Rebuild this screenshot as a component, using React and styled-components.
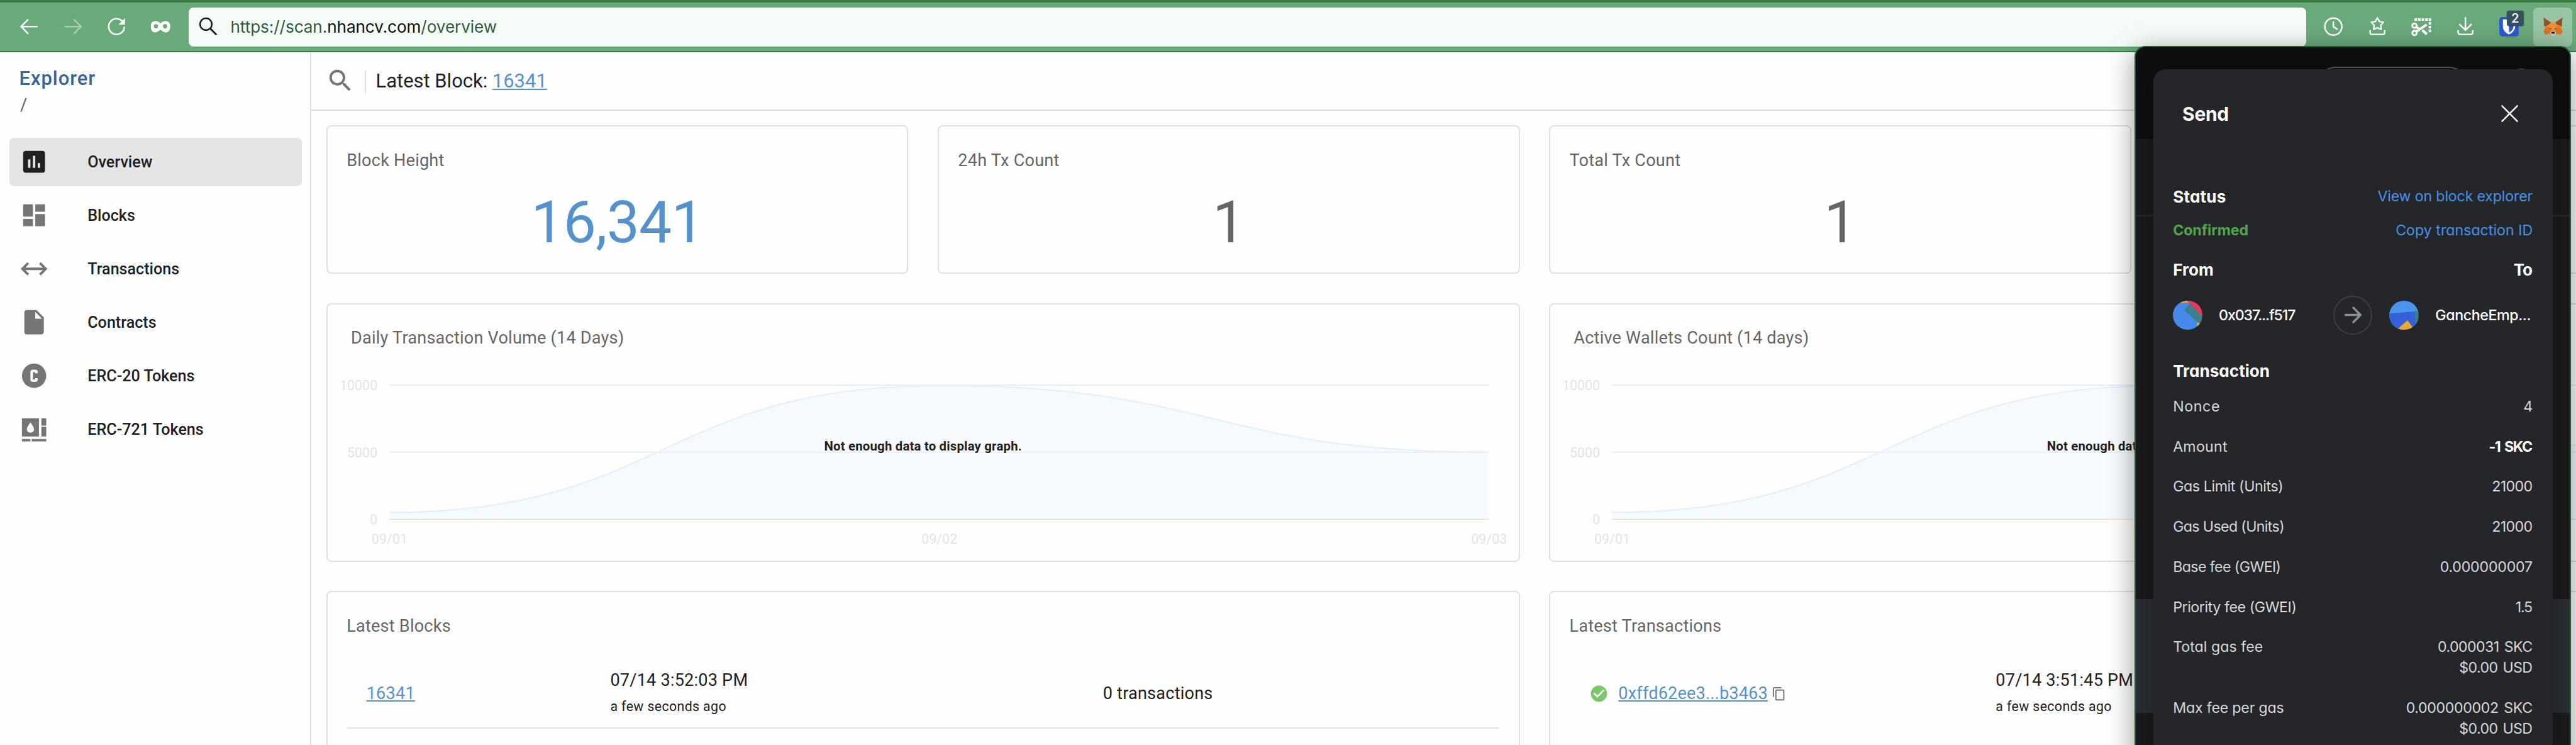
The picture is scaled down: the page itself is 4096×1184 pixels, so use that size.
import React from 'react';
import styled, { createGlobalStyle } from 'styled-components';

const GlobalStyle = createGlobalStyle`
  html, body { margin: 0; padding: 0; background: #fff; overflow: hidden; }
  *, *::before, *::after { box-sizing: border-box; }
`;

const Window = styled.div`
  zoom: 0.967;
  position: relative;
  display: flex;
  flex-direction: column;
  width: 4236px;
  height: 1224.5px;
  overflow: hidden;
  background: #fefefe;
  color: #212121;
  font-family: Roboto, "Liberation Sans", sans-serif;
`;

/* ---------- Browser toolbar ---------- */

const Toolbar = styled.header`
  display: flex;
  align-items: center;
  flex: none;
  height: 86px;
  padding: 0 6px 0 24px;
  background: #69aa7b;
  border-top: 4.2px solid #397d43;
  border-bottom: 2.1px solid #3a7d44;
`;

const NavButtons = styled.div`
  display: flex;
  gap: 24px;
  width: 286px;
  flex: none;
`;

const ToolIcon = styled.svg`
  display: block;
  flex: none;
  width: ${(p) => p.$size || 48}px;
  height: ${(p) => p.$size || 48}px;
  opacity: ${(p) => (p.$dim ? 0.42 : 1)};
  overflow: visible;
  fill: none;
  stroke: ${(p) => p.$stroke || '#fff'};
  stroke-width: ${(p) => p.$weight || 2.6};
  stroke-linecap: round;
  stroke-linejoin: round;
`;

const AddressBar = styled.div`
  display: flex;
  align-items: center;
  flex: none;
  width: 3482px;
  height: 64px;
  border-radius: 8px;
  background: #f5fbf7;
  padding-left: 14px;
`;

const Url = styled.span`
  margin-left: 15px;
  padding-top: 1.5px;
  line-height: 40px;
  font-family: Inter, sans-serif;
  font-size: 27px;
  letter-spacing: -0.06px;
  color: #315a3a;
  b { font-weight: 400; color: #0b0f0c; }
`;

const Extensions = styled.div`
  display: flex;
  align-items: center;
  justify-content: space-between;
  flex: 1;
  padding-left: 13px;
`;

const ExtensionSlot = styled.div`
  position: relative;
  display: flex;
  align-items: center;
  justify-content: center;
  width: 64px;
  height: 64px;
  border-radius: 8px;
  background: ${(p) => (p.$active ? '#97c4a3' : 'transparent')};
`;

const CountBadge = styled.span`
  position: absolute;
  top: 6px;
  right: 8px;
  width: 28px;
  height: 24px;
  border-radius: 4px;
  background: #35505f;
  color: #fff;
  font: 500 21px/24px Inter, sans-serif;
  text-align: center;
  box-shadow: 0 1px 2px rgba(0, 0, 0, 0.35);
`;

/* ---------- Page ---------- */

const Page = styled.div`
  display: flex;
  flex: 1;
  min-height: 0;
`;

const Sidebar = styled.aside`
  flex: none;
  width: 512px;
  padding-top: 23.8px;
  border-right: 2.1px solid #e0e0e0;
`;

const Brand = styled.div`
  padding-left: 31.5px;
  font-size: 32px;
  font-weight: 500;
  line-height: 40px;
  letter-spacing: 1px;
  color: #366596;
`;

const Crumb = styled.div`
  padding: 2.9px 0 0 33px;
  font-size: 28px;
  line-height: 40px;
  color: #5f5f5f;
`;

const Menu = styled.nav`
  display: flex;
  flex-direction: column;
  gap: 8px;
  padding: 33.3px 14px 0 16px;
`;

const MenuItem = styled.a`
  display: flex;
  align-items: center;
  gap: 64px;
  height: 80px;
  padding-left: 16px;
  border-radius: 8px;
  background: ${(p) => (p.$active ? '#e4e4e4' : 'transparent')};
  font-size: 26px;
  font-weight: 500;
  color: #212121;
`;

const Glyph = styled.svg`
  display: block;
  flex: none;
  width: ${(p) => p.$size || 48}px;
  height: ${(p) => p.$size || 48}px;
  fill: ${(p) => p.$color || '#757575'};
`;

const Main = styled.main`
  flex: 1;
  min-width: 0;
  overflow: hidden;
`;

const SearchBar = styled.div`
  display: flex;
  align-items: center;
  height: 96px;
  padding-left: 24px;
  border-bottom: 2.1px solid #e0e0e0;
`;

const Divider = styled.i`
  width: 2px;
  height: 38px;
  margin: 4px 16px 0;
  background: #e0e0e0;
`;

const LatestBlock = styled.div`
  padding-top: 1.5px;
  font-size: 32px;
  line-height: 40px;
  letter-spacing: 0;
`;

const Link = styled.a`
  color: #5592cc;
  text-decoration: underline;
  text-decoration-thickness: ${(p) => p.$rule || 1.1}px;
  text-underline-offset: ${(p) => p.$offset || 2}px;
  text-decoration-skip-ink: none;
`;

const Dashboard = styled.div`
  display: grid;
  grid-template-columns: repeat(4, 957.3px);
  grid-template-rows: 244px 425px 425px;
  gap: 48px;
  padding: 24px 0 0 24.5px;
`;

const Card = styled.section`
  grid-column: span ${(p) => p.$span || 1};
  border: 2.1px solid #e0e0e0;
  border-radius: 8px;
`;

const CardTitle = styled.h2`
  margin: 0;
  padding: 35.8px 0 0 ${(p) => p.$left || 31.5}px;
  font-size: 28px;
  font-weight: 400;
  line-height: 40px;
  letter-spacing: 0.23px;
  color: #666;
`;

const BigNumber = styled.div`
  padding-top: 26px;
  font-size: 96px;
  line-height: 112px;
  letter-spacing: -0.8px;
  text-align: center;
  color: ${(p) => (p.$accent ? '#5592cc' : '#666')};
`;

const ChartArea = styled.div`
  position: relative;
  height: 345px;
`;

const ChartSvg = styled.svg`
  display: block;
  width: 1958px;
  height: 345px;
  text {
    font-family: Roboto, sans-serif;
    font-size: 22px;
    fill: #e4e4e4;
    letter-spacing: 0.1px;
  }
`;

const ChartMessage = styled.div`
  position: absolute;
  left: 0;
  right: 0;
  top: 142px;
  text-align: center;
  font-size: 21px;
  font-weight: 700;
  line-height: 32px;
  letter-spacing: 0.22px;
`;

const ListRow = styled.div`
  display: grid;
  grid-template-columns: ${(p) => p.$columns};
  align-items: center;
  height: 115.6px;
  margin: 33px 32px 0;
  padding: 3px 0 0 32px;
  border-bottom: ${(p) => (p.$ruled ? '2.1px solid #e0e0e0' : '2.1px solid transparent')};
  font-size: 28px;
  line-height: 40px;
  letter-spacing: 0.23px;
`;

const HashCell = styled.div`
  display: flex;
  align-items: center;
  a { margin: 0 6px 0 16px; letter-spacing: 0.2px; }
`;

const Ago = styled.div`
  margin-top: 4px;
  font-size: 22px;
  letter-spacing: 0.42px;
`;

/* ---------- Wallet popup ---------- */

const Popup = styled.div`
  position: absolute;
  left: 3510px;
  top: 76px;
  width: 718px;
  height: 1180px;
  display: flex;
  flex-direction: column;
  border: 2.1px solid #2b5e35;
  border-radius: 18px 18px 0 0;
  background: #1a1b1d;
  box-shadow: 0 10px 44px rgba(0, 0, 0, 0.42);
  overflow: hidden;
`;

const PopupBand = styled.div`
  flex: none;
  height: ${(p) => p.$height}px;
  background: ${(p) => p.$color};
  border-bottom: ${(p) => (p.$ruled ? '2.1px solid #292b2f' : 'none')};
`;

const AccountPill = styled.div`
  position: absolute;
  left: 299px;
  top: 32px;
  width: 246px;
  height: 60px;
  border: 2.1px solid #555a61;
  border-radius: 30px;
`;

const NetworkDot = styled.div`
  position: absolute;
  left: 610px;
  top: 35px;
  width: 48px;
  height: 48px;
  border-radius: 50%;
  background: #2f6fb5;
`;

const Modal = styled.div`
  position: absolute;
  left: 29px;
  top: 36px;
  width: 656px;
  height: 1140px;
  padding: 53.1px 32.5px 0 32px;
  border-radius: 20px;
  background: #25262a;
  box-shadow: 0 4px 40px rgba(0, 0, 0, 0.3);
  color: #d6d9dc;
  font-family: Inter, sans-serif;
  font-size: 24px;
  font-feature-settings: "cv11";
`;

const ModalTitle = styled.div`
  display: flex;
  justify-content: space-between;
  align-items: center;
  height: 40px;
  margin-bottom: 97.4px;
  padding: 0 24px 0 15.5px;
  font-size: 31px;
  font-weight: 700;
  line-height: 40px;
  letter-spacing: -0.35px;
  color: #fff;
`;

const ModalLine = styled.div`
  display: flex;
  justify-content: space-between;
  align-items: flex-start;
  height: 40px;
  margin-bottom: ${(p) => p.$after || 0}px;
`;

const Heading = styled.span`
  font-size: 27px;
  font-weight: 700;
  line-height: 40px;
  color: #fff;
  letter-spacing: ${(p) => p.$track || 0}px;
  margin-right: ${(p) => -(p.$track || 0)}px;
`;

const Action = styled.a`
  font-size: 24px;
  line-height: ${(p) => p.$leading || 38}px;
  letter-spacing: ${(p) => p.$track || 0}px;
  color: #4393ee;
`;

const Confirmed = styled.span`
  font-weight: 700;
  line-height: 40px;
  letter-spacing: -0.1px;
  color: #4fa84a;
`;

const Account = styled.div`
  display: flex;
  align-items: center;
  gap: 27.5px;
  font-weight: 500;
  color: #fff;
  letter-spacing: ${(p) => p.$track}px;
`;

const Avatar = styled.svg`
  display: block;
  width: 48px;
  height: 48px;
  border-radius: 50%;
`;

const Parties = styled.div`
  display: grid;
  grid-template-columns: 264px 64px 1fr;
  align-items: center;
  height: 64px;
  margin-bottom: 41px;
`;

const ArrowRing = styled.div`
  display: flex;
  align-items: center;
  justify-content: center;
  width: 64px;
  height: 64px;
  border: 2.1px solid #3c3e43;
  border-radius: 50%;
`;

const ToAccount = styled(Account)`
  margin-left: 28px;
`;

const Detail = styled.div`
  display: flex;
  justify-content: space-between;
  margin-bottom: 31.9px;
  line-height: 34px;
`;

const Track = styled.span`
  display: block;
  text-align: right;
  white-space: nowrap;
  word-spacing: ${(p) => p.$gap || 0}px;
  letter-spacing: ${(p) => p.$track || 0}px;
  margin-right: ${(p) => -(p.$track || 0)}px;
  color: ${(p) => (p.$strong ? '#fff' : 'inherit')};
  font-weight: ${(p) => (p.$strong ? 700 : 400)};
`;

const menu = [
  ['Overview', 'M19 3H5c-1.1 0-2 .9-2 2v14c0 1.1.9 2 2 2h14c1.1 0 2-.9 2-2V5c0-1.1-.9-2-2-2zM9 17H7v-7h2v7zm4 0h-2V7h2v10zm4 0h-2v-4h2v4z'],
  ['Blocks', 'M3 13h8V3H3v10zm0 8h8v-6H3v6zm10 0h8V11h-8v10zm0-18v6h8V3h-8z'],
  ['Transactions', 'M6.45,17.45L1,12L6.45,6.55L7.86,7.96L4.83,11H19.17L16.14,7.96L17.55,6.55L23,12L17.55,17.45L16.14,16.04L19.17,13H4.83L7.86,16.04Z'],
  ['Contracts', 'M6 2c-1.1 0-1.99.9-1.99 2L4 20c0 1.1.89 2 1.99 2H18c1.1 0 2-.9 2-2V8l-6-6H6zm7 7V3.5L18.5 9H13z'],
  ['ERC-20 Tokens', 'M12,2A10,10 0 0,1 22,12A10,10 0 0,1 12,22A10,10 0 0,1 2,12A10,10 0 0,1 12,2M11,7A2,2 0 0,0 9,9V15A2,2 0 0,0 11,17H13A2,2 0 0,0 15,15V14H13V15H11V9H13V10H15V9A2,2 0 0,0 13,7H11Z'],
  ['ERC-721 Tokens', 'M2 3H16V18H2ZM18 3H22V9H18ZM18 10H22V18H18ZM2 20H9V22H2ZM10 20H22V22H10ZM9 6.3C7.4 8.8 6.1 10.3 6.1 12C6.1 13.7 7.4 14.8 9 14.8S11.9 13.7 11.9 12C11.9 10.3 10.6 8.8 9 6.3Z'],
];

const details = [
  ['Nonce', 0.66, [['4', 0]]],
  ['Amount', 0.25, [['-1 SKC', -1.6, 3]], true],
  ['Gas Limit (Units)', -0.42, [['21000', -0.67]]],
  ['Gas Used (Units)', -0.66, [['21000', -0.67]]],
  ['Base fee (GWEI)', -0.62, [['0.000000007', -0.25]]],
  ['Priority fee (GWEI)', -0.44, [['1.5', -1.3]]],
  ['Total gas fee', 0.02, [['0.000031 SKC', -0.65, 2.5], ['$0.00 USD', -0.6, 2]]],
  ['Max fee per gas', -0.2, [['0.000000002 SKC', -0.4, 2.5], ['$0.00 USD', -0.6, 2]]],
];

function Chart() {
  return (
    <ChartArea>
      <ChartSvg viewBox="538.6 575.7 1958 345">
        <path d="M640 842C1092 842 1092 632.5 1544 632.5C1996 632.5 1996 743 2448 743V853H640Z" fill="#f6fafd" />
        <path d="M640 632.7H2448" stroke="#d3e4f3" strokeWidth="1.2" />
        <path d="M640 743H2448" stroke="#e9f1f8" strokeWidth="2.4" />
        <path d="M640 853.3H2448" stroke="#d3e2f0" strokeWidth="1.2" />
        <path d="M640 842C1092 842 1092 633.5 1544 633.5C1996 633.5 1996 743 2448 743" fill="none" stroke="#e5f0f8" strokeWidth="2.6" />
        <text x="620.5" y="641" textAnchor="end">10000</text>
        <text x="620.5" y="751" textAnchor="end">5000</text>
        <text x="620.5" y="861.5" textAnchor="end">0</text>
        <text x="640.5" y="893" textAnchor="middle">09/01</text>
        <text x="1544.5" y="893" textAnchor="middle">09/02</text>
        <text x="2448.5" y="893" textAnchor="middle">09/03</text>
      </ChartSvg>
      <ChartMessage>Not enough data to display graph.</ChartMessage>
    </ChartArea>
  );
}

function Extras() {
  return (
    <Extensions>
      <ExtensionSlot>
        <ToolIcon viewBox="0 0 48 48">
          <circle cx="24" cy="24" r="14" />
          <path d="M24 16.5V24.2L30 28.3" />
        </ToolIcon>
      </ExtensionSlot>
      <ExtensionSlot>
        <ToolIcon viewBox="0 0 48 48">
          <path d="M24 9.5L27.3 15.6L34 16.9L29.4 22L30.2 28.8L24 26L17.8 28.8L18.6 22L14 16.9L20.7 15.6Z" strokeWidth="2.4" />
          <path d="M12 31V34Q12 37 15 37H33Q36 37 36 34V31" />
        </ToolIcon>
      </ExtensionSlot>
      <ExtensionSlot>
        <ToolIcon viewBox="0 0 48 48">
          <g strokeLinecap="butt" strokeWidth="4">
            <path d="M12.5 12.5H36" strokeDasharray="4.3 1.6" />
            <path d="M38 10.5V34" strokeDasharray="4.3 1.8" />
          </g>
          <circle cx="12.6" cy="22.6" r="3.6" strokeWidth="3" />
          <circle cx="12.6" cy="34.6" r="3.6" strokeWidth="3" />
          <path d="M15.5 32.5L32.5 20.8" strokeWidth="4" strokeLinecap="butt" />
          <path d="M15 24.5L20.5 28" strokeWidth="4" strokeLinecap="butt" />
          <path d="M25.5 30L33 36.5" strokeWidth="4.4" strokeLinecap="butt" />
        </ToolIcon>
      </ExtensionSlot>
      <ExtensionSlot>
        <ToolIcon viewBox="0 0 48 48">
          <path d="M24 9.5V29M14.5 20.5L24 29.8L33.5 20.5" />
          <path d="M12 31V34Q12 37 15 37H33Q36 37 36 34V31" />
        </ToolIcon>
      </ExtensionSlot>
      <ExtensionSlot>
        <Glyph viewBox="0 0 32 32" $size={32}>
          <rect width="32" height="32" rx="5" fill="#2c5ad6" />
          <path d="M6 4H26V16C26 22.5 20.5 26.5 16 28.8C11.5 26.5 6 22.5 6 16Z" fill="#fff" />
          <path d="M16 7H23.2V16C23.2 20.5 19.5 23.5 16 25.6Z" fill="#2c5ad6" />
        </Glyph>
        <CountBadge>2</CountBadge>
      </ExtensionSlot>
      <ExtensionSlot $active>
        <Glyph viewBox="0 0 32 32" $size={32}>
          <path d="M.5 1L12.5 9H19.5L31.5 1L30.5 15L28.8 18L31.5 23.5L29 29L22.5 27.5L19.5 30H12.5L9.5 27.5L3 29L.5 23.5L3.2 18L1.5 15Z" fill="#e28534" />
          <path d="M.5 1L12.5 9L9.5 12.5L1.6 15.5Z" fill="#8a532b" />
          <path d="M31.5 1L19.5 9L22.5 12.5L30.4 15.5Z" fill="#8a532b" />
          <path d="M9.5 12.5L12.5 9H19.5L22.5 12.5L19.8 24H12.2Z" fill="#ea8f3c" />
          <path d="M3.2 18L10 16.5L12.2 24L9.5 27.5L3 29L.5 23.5Z" fill="#dd7425" />
          <path d="M28.8 18L22 16.5L19.8 24L22.5 27.5L29 29L31.5 23.5Z" fill="#dd7425" />
          <path d="M9.8 18.8L13 18.3L12.8 20.4Z" fill="#3d3a3d" />
          <path d="M22.2 18.8L19 18.3L19.2 20.4Z" fill="#3d3a3d" />
          <path d="M11 25L13 23.8H19L21 25L19.5 29.5L17.5 31H14.5L12.5 29.5Z" fill="#dccbbf" />
          <path d="M13 24.5H19L18.4 27.4H13.6Z" fill="#17110e" />
        </Glyph>
      </ExtensionSlot>
    </Extensions>
  );
}

export default function App() {
  return (
    <>
      <GlobalStyle />
      <Window>
        <Toolbar>
          <NavButtons>
            <ToolIcon viewBox="0 0 48 48"><path d="M37 24H11M22 12.8L11 24L22 35.2" /></ToolIcon>
            <ToolIcon viewBox="0 0 48 48" $dim><path d="M11 24H37M26 12.8L37 24L26 35.2" /></ToolIcon>
            <ToolIcon viewBox="0 0 48 48">
              <path d="M35.8 18.5A12.9 12.9 0 1 0 37 25" />
              <path d="M37.5 11.5V20.5H28.5Z" fill="#fff" strokeWidth="1" />
            </ToolIcon>
            <ToolIcon viewBox="0 0 48 48">
              <path d="M8 23C8 17.5 11.5 15 15.5 15C19.5 15 22 16.8 24 18.5C26 16.8 28.5 15 32.5 15C36.5 15 40 17.5 40 23C40 29 38 33.5 33 33.5C28 33.5 26 30 24 29.5C22 30 20 33.5 15 33.5C10 33.5 8 29 8 23Z" fill="#fff" stroke="none" />
              <circle cx="16.5" cy="23.5" r="3.5" fill="#69aa7b" stroke="none" />
              <circle cx="31.5" cy="23.5" r="3.5" fill="#69aa7b" stroke="none" />
            </ToolIcon>
          </NavButtons>
          <AddressBar>
            <ToolIcon viewBox="0 0 40 40" $size={40} $stroke="#1b1f1c">
              <circle cx="15" cy="16" r="9.7" />
              <path d="M22 23L31.5 32.5" strokeWidth="3" />
            </ToolIcon>
            <Url>https://scan.<b>nhancv.com</b>/overview</Url>
          </AddressBar>
          <Extras />
        </Toolbar>

        <Page>
          <Sidebar>
            <Brand>Explorer</Brand>
            <Crumb>/</Crumb>
            <Menu>
              {menu.map(([label, d], i) => (
                <MenuItem key={label} $active={i === 0}>
                  <Glyph viewBox="0 0 24 24" $color={i === 0 ? '#212121' : '#757575'}>
                    <path d={d} fillRule="evenodd" />
                  </Glyph>
                  {label}
                </MenuItem>
              ))}
            </Menu>
          </Sidebar>

          <Main>
            <SearchBar>
              <Glyph viewBox="0 0 24 24">
                <path d="M15.5 14h-.79l-.28-.27C15.41 12.59 16 11.11 16 9.5 16 5.91 13.09 3 9.5 3S3 5.91 3 9.5 5.91 16 9.5 16c1.61 0 3.09-.59 4.23-1.57l.27.28v.79l5 4.99L20.49 19l-4.99-5zm-6 0C7.01 14 5 11.99 5 9.5S7.01 5 9.5 5 14 7.01 14 9.5 11.99 14 9.5 14z" />
              </Glyph>
              <Divider />
              <LatestBlock>Latest Block: <Link $rule={2.2} $offset={2.5}>16341</Link></LatestBlock>
            </SearchBar>

            <Dashboard>
              <Card>
                <CardTitle>Block Height</CardTitle>
                <BigNumber $accent>16,341</BigNumber>
              </Card>
              <Card>
                <CardTitle>24h Tx Count</CardTitle>
                <BigNumber>1</BigNumber>
              </Card>
              <Card>
                <CardTitle>Total Tx Count</CardTitle>
                <BigNumber>1</BigNumber>
              </Card>
              <Card />

              <Card $span={2}>
                <CardTitle $left={38.6}>Daily Transaction Volume (14 Days)</CardTitle>
                <Chart />
              </Card>
              <Card $span={2}>
                <CardTitle $left={38.6}>Active Wallets Count (14 days)</CardTitle>
                <Chart />
              </Card>

              <Card $span={2}>
                <CardTitle>Latest Blocks</CardTitle>
                <ListRow $ruled $columns="401px 810px 1fr">
                  <div><Link $rule={2}>16341</Link></div>
                  <div>07/14 3:52:03 PM<Ago>a few seconds ago</Ago></div>
                  <div>0 transactions</div>
                </ListRow>
              </Card>
              <Card $span={2}>
                <CardTitle>Latest Transactions</CardTitle>
                <ListRow $columns="668.5px 1fr">
                  <HashCell>
                    <Glyph viewBox="0 0 24 24" $size={32} $color="#7ac86b">
                      <path d="M12 2C6.48 2 2 6.48 2 12s4.48 10 10 10 10-4.48 10-10S17.52 2 12 2zm-2 15l-5-5 1.41-1.41L10 14.17l7.59-7.59L19 8l-9 9z" />
                    </Glyph>
                    <Link $rule={2}>0xffd62ee3...b3463</Link>
                    <Glyph viewBox="0 0 24 24" $size={24}>
                      <path d="M16 1H4c-1.1 0-2 .9-2 2v14h2V3h12V1zm3 4H8c-1.1 0-2 .9-2 2v14c0 1.1.9 2 2 2h11c1.1 0 2-.9 2-2V7c0-1.1-.9-2-2-2zm0 16H8V7h11v14z" />
                    </Glyph>
                  </HashCell>
                  <div>07/14 3:51:45 PM<Ago>a few seconds ago</Ago></div>
                </ListRow>
              </Card>
            </Dashboard>
          </Main>
        </Page>

        <Popup>
          <PopupBand $height={150} $color="#0e0f11" />
          <PopupBand $height={128} $color="#1a1b1d" $ruled />
          <PopupBand $height={628} $color="#1a1b1d" />
          <PopupBand $height={188} $color="#2b2e33" />
          <AccountPill />
          <NetworkDot />
          <Modal>
            <ModalTitle>
              Send
              <ToolIcon viewBox="0 0 28 28" $size={28}><path d="M1.5 1.5L26.5 26.5M26.5 1.5L1.5 26.5" /></ToolIcon>
            </ModalTitle>
            <ModalLine $after={14.1}>
              <Heading $track={0.19}>Status</Heading>
              <Action $track={-0.18}>View on block explorer</Action>
            </ModalLine>
            <ModalLine $after={25.9}>
              <Confirmed>Confirmed</Confirmed>
              <Action $leading={40}>Copy transaction ID</Action>
            </ModalLine>
            <ModalLine $after={21.5}>
              <Heading>From</Heading>
              <Heading $track={-1}>To</Heading>
            </ModalLine>
            <Parties>
              <Account $track={-1.17}>
                <Avatar viewBox="0 0 48 48">
                  <rect width="48" height="48" fill="#468bec" />
                  <path d="M8 0H24L26 3H12Z" fill="#e8a838" />
                  <path d="M24 0H48V26L26 3Z" fill="#e63a56" />
                  <path d="M28 5L18.5 15.5L42 37L48 36V26Z" fill="#3d7f8c" />
                  <path d="M40 35L48 40L40 44Z" fill="#e8a838" />
                </Avatar>
                0x037...f517
              </Account>
              <ArrowRing>
                <ToolIcon viewBox="0 0 28 28" $size={28} $stroke="#8a9099" $weight={3.6}>
                  <path d="M1.5 14H26M14.5 2.2L26.3 14L14.5 25.8" />
                </ToolIcon>
              </ArrowRing>
              <ToAccount $track={-0.42}>
                <Avatar viewBox="0 0 48 48">
                  <rect width="48" height="48" fill="#4994ec" />
                  <path d="M0 21L48 17V48H0Z" fill="#3560dc" />
                  <path d="M42 17H48V40L43 36Z" fill="#3a7f8b" />
                  <path d="M30 32L42 48H12Z" fill="#e8a838" />
                </Avatar>
                GancheEmp...
              </ToAccount>
            </Parties>
            <ModalLine $after={20.5}>
              <Heading>Transaction</Heading>
            </ModalLine>
            {details.map(([label, track, values, strong]) => (
              <Detail key={label}>
                <Track $track={track}>{label}</Track>
                <div>
                  {values.map(([value, t, gap]) => (
                    <Track key={value} $track={t} $gap={gap} $strong={strong}>{value}</Track>
                  ))}
                </div>
              </Detail>
            ))}
          </Modal>
        </Popup>
      </Window>
    </>
  );
}
